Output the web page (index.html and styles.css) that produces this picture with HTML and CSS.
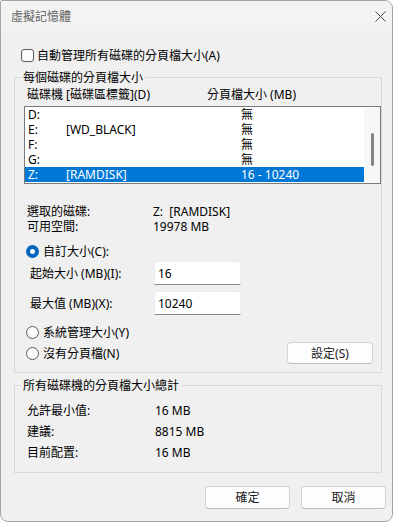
FILE: index.html
```html
<!DOCTYPE html>
<html lang="zh-Hant">
<head>
<meta charset="utf-8">
<title>虛擬記憶體</title>
<link rel="stylesheet" href="styles.css">
</head>
<body>
<div class="window">
  <div class="titlebar">
    <span class="title">虛擬記憶體</span>
    <svg class="close" width="11" height="11" viewBox="0 0 11 11"><path d="M0.5 0.5L10.5 10.5M10.5 0.5L0.5 10.5" stroke="#4a4a4a" stroke-width="1" fill="none"/></svg>
  </div>
  <div class="body">
    <div class="check-row"><span class="checkbox"></span><span>自動管理所有磁碟的分頁檔大小(A)</span></div>

    <fieldset class="group group-drives">
      <legend>每個磁碟的分頁檔大小</legend>
      <div class="list-head"><span>磁碟機 [磁碟區標籤](D)</span><span>分頁檔大小 (MB)</span></div>
      <div class="listbox">
        <div class="rows">
          <div class="row"><span>D:</span><span></span><span>無</span></div>
          <div class="row"><span>E:</span><span>[WD_BLACK]</span><span>無</span></div>
          <div class="row"><span>F:</span><span></span><span>無</span></div>
          <div class="row"><span>G:</span><span></span><span>無</span></div>
          <div class="row selected"><span>Z:</span><span>[RAMDISK]</span><span>16 - 10240</span></div>
        </div>
        <div class="scrollbar"><div class="thumb"></div></div>
      </div>
      <div class="info">
        <div class="kv"><span>選取的磁碟:</span><span>Z:&nbsp; [RAMDISK]</span></div>
        <div class="kv"><span>可用空間:</span><span>19978 MB</span></div>
      </div>
      <div class="radio-row first-radio"><span class="radio on"></span><span>自訂大小(C):</span></div>
      <div class="field-row first-field"><span>起始大小 (MB)(I):</span><span class="input">16</span></div>
      <div class="field-row second-field"><span>最大值 (MB)(X):</span><span class="input">10240</span></div>
      <div class="radio-row sys-radio"><span class="radio"></span><span>系統管理大小(Y)</span></div>
      <div class="last-row">
        <div class="radio-row"><span class="radio"></span><span>沒有分頁檔(N)</span></div>
        <span class="button set-btn">設定(S)</span>
      </div>
    </fieldset>

    <fieldset class="group group-total">
      <legend>所有磁碟機的分頁檔大小總計</legend>
      <div class="kv2 first-kv2"><span>允許最小值:</span><span>16 MB</span></div>
      <div class="kv2"><span>建議:</span><span>8815 MB</span></div>
      <div class="kv2"><span>目前配置:</span><span>16 MB</span></div>
    </fieldset>

    <div class="buttons">
      <span class="button dlg-btn">確定</span>
      <span class="button dlg-btn">取消</span>
    </div>
  </div>
</div>
</body>
</html>
```

FILE: styles.css
```css
html, body {
  margin: 0;
  padding: 0;
  background: #ffffff;
}

body {
  font-family: "Noto Sans", "Noto Sans CJK TC", sans-serif;
  font-size: 12px;
  line-height: 15px;
  color: #000000;
}

.window {
  box-sizing: border-box;
  width: 393px;
  height: 522px;
  border: 1px solid #a6a6a6;
  border-radius: 8px;
  border-top-left-radius: 2px;
  background: #f0f0f0;
  overflow: hidden;
  display: flex;
  flex-direction: column;
}

.titlebar {
  height: 30px;
  flex: none;
  background: #f3f3f3;
  display: flex;
  align-items: center;
  justify-content: space-between;
  padding: 0 6px 0 10px;
}

.title {
  color: #666666;
}

.close {
  display: block;
  margin-top: 1px;
}

.body {
  flex: 1;
  padding: 0 0 0 13px;
}

.check-row {
  margin-top: 17px;
  height: 15px;
  display: flex;
  align-items: center;
}

.checkbox {
  box-sizing: border-box;
  width: 13px;
  height: 13px;
  margin-left: 7px;
  margin-right: 3px;
  border: 1px solid #5a5a5a;
  border-radius: 3px;
  background: #fbfbfb;
}

.group {
  box-sizing: border-box;
  width: 368px;
  margin: 0;
  border: 1px solid #d9d9d9;
  min-width: 0;
}

.group legend {
  margin-left: -3px;
  padding: 0 2px;
  line-height: 15px;
}

.group-drives {
  margin-top: 7px;
  padding: 0 0 8px 9px;
}

.list-head {
  margin-top: 2px;
  height: 15px;
  padding-left: 3px;
  display: grid;
  grid-template-columns: 180px 1fr;
}

.listbox {
  margin-top: 4px;
  box-sizing: border-box;
  height: 78px;
  border: 1px solid #7a7a7a;
  background: #ffffff;
  display: flex;
}

.rows {
  width: 339px;
}

.row {
  height: 15px;
  padding-left: 3px;
  display: grid;
  grid-template-columns: 38px 175px 1fr;
  white-space: nowrap;
}

.row.selected {
  background: #0078d7;
  color: #ffffff;
}

.scrollbar {
  flex: 1;
  background: #f7f7f7;
  display: flex;
  justify-content: center;
  padding-top: 26px;
}

.thumb {
  width: 3px;
  height: 33px;
  border-radius: 2px;
  background: #858585;
  margin-left: 1px;
}

.info {
  margin-top: 20px;
  padding-left: 3px;
}

.kv {
  height: 15px;
  display: grid;
  grid-template-columns: 126px 1fr;
}

.radio-row {
  height: 15px;
  display: flex;
  align-items: center;
}

.radio {
  box-sizing: border-box;
  width: 13px;
  height: 13px;
  margin-left: 2px;
  margin-right: 4px;
  border-radius: 50%;
  border: 1px solid #5a5a5a;
  background: #fbfbfb;
}

.radio.on {
  border: 4px solid #0067c0;
  background: #ffffff;
}

.first-radio {
  margin-top: 10px;
}

.field-row {
  height: 24px;
  padding-left: 6px;
  display: grid;
  grid-template-columns: 124px 87px;
  align-items: center;
}

.first-field {
  margin-top: 2px;
}

.second-field {
  margin-top: 6px;
}

.input {
  box-sizing: border-box;
  height: 24px;
  padding: 4px 0 0 3px;
  background: #ffffff;
  border: 1px solid #ececec;
  border-bottom: 1px solid #8a8a8a;
  border-radius: 3px 3px 0 0;
}

.sys-radio {
  margin-top: 10px;
}

.last-row {
  margin-top: 2px;
  height: 22px;
  display: flex;
  align-items: center;
  justify-content: space-between;
  padding-right: 8px;
}

.button {
  box-sizing: border-box;
  display: flex;
  align-items: center;
  justify-content: center;
  background: #fdfdfd;
  border: 1px solid #d3d3d3;
  border-bottom-color: #bcbcbc;
  border-radius: 4px;
  color: #1b1b1b;
}

.set-btn {
  width: 86px;
  height: 22px;
}

.group-total {
  margin-top: 5px;
  padding: 0 0 12px 9px;
}

.kv2 {
  margin-top: 6px;
  height: 15px;
  padding-left: 3px;
  display: grid;
  grid-template-columns: 128px 1fr;
}

.kv2.first-kv2 {
  margin-top: 10px;
}

.buttons {
  margin-top: 13px;
  padding-right: 6px;
  display: flex;
  justify-content: flex-end;
  gap: 11px;
}

.dlg-btn {
  width: 85px;
  height: 23px;
}
```
